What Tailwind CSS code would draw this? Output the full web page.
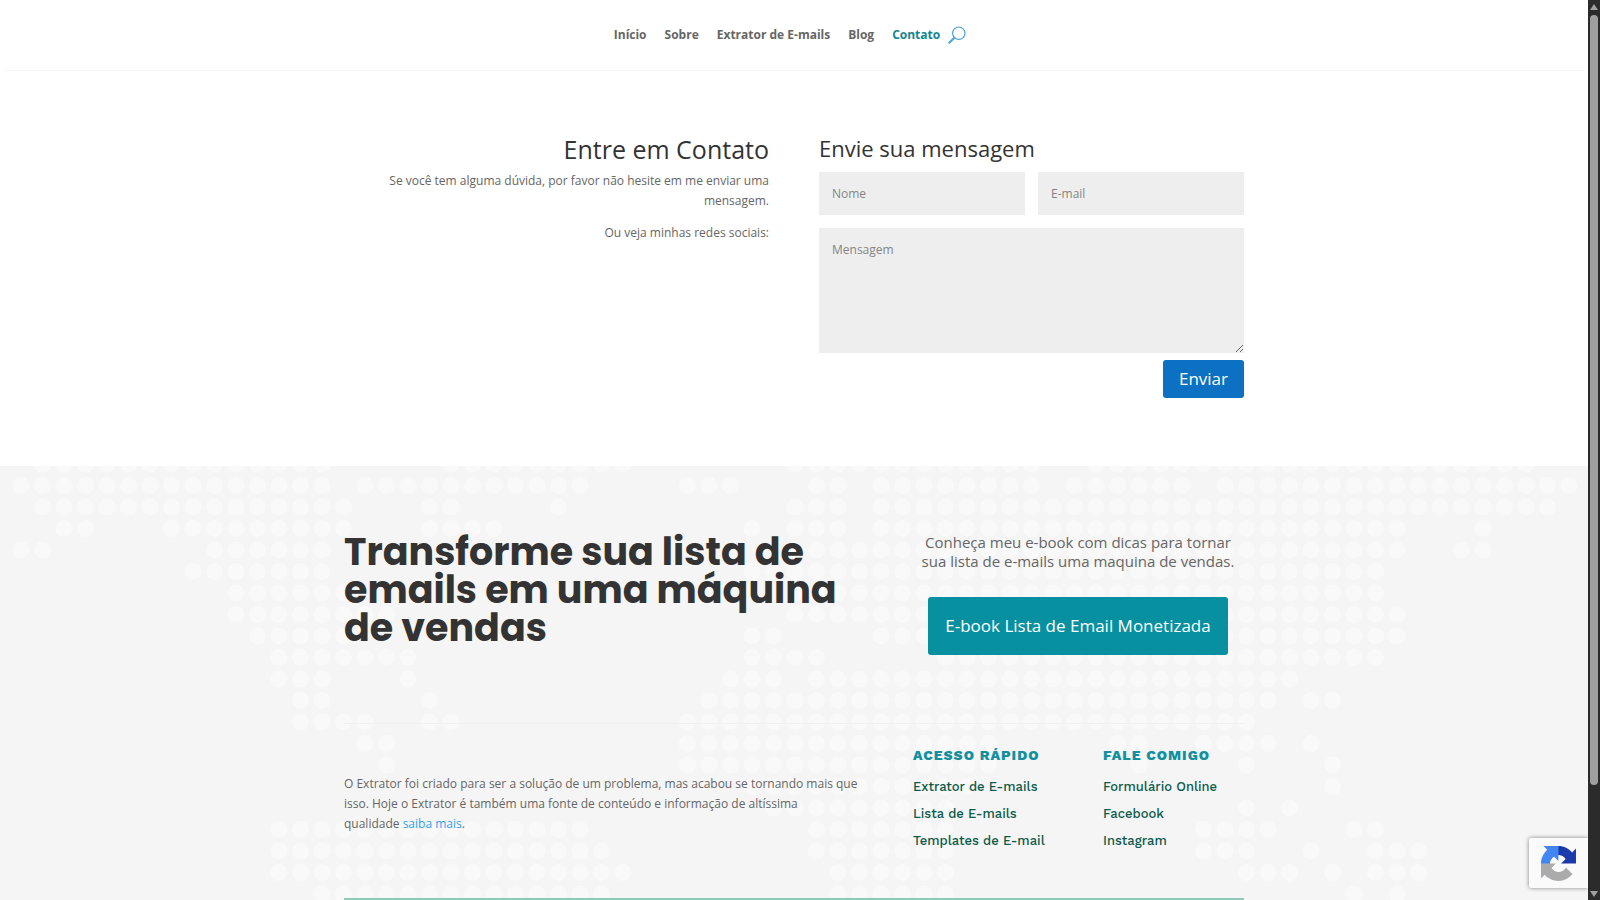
<!DOCTYPE html>
<html lang="pt-BR">
<head>
  <meta charset="UTF-8">
  <title>Contato - Extrator de E-mails</title>
  <meta name="viewport" content="width=device-width, initial-scale=1.0">
  <script src="https://cdn.jsdelivr.net/npm/@tailwindcss/browser@4"></script>
</head>
<body class="h-screen flex overflow-hidden bg-white font-['Open_Sans',sans-serif] text-[12px] leading-5 text-[#666]">

  <div class="relative flex-1 min-w-0 flex flex-col overflow-hidden">

    <header class="mx-1 h-[71px] shrink-0 border-b border-[#f5f5f5] flex justify-center">
      <nav class="flex items-center h-[70px] gap-[18px] pr-2 font-bold">
        <a href="#">Início</a>
        <a href="#">Sobre</a>
        <a href="#">Extrator de E-mails</a>
        <a href="#">Blog</a>
        <div class="flex items-center gap-2">
          <a href="#" class="text-[#13858f]">Contato</a>
          <button type="button" aria-label="Pesquisar" class="text-[#4ba3dc]">
            <svg class="size-[18px]" viewBox="0 0 18 18" fill="none" stroke="currentColor">
              <circle cx="10.8" cy="7.2" r="6.2" stroke-width="1.2"/>
              <path d="M6.3 11.7 1.3 16.7" stroke-width="2" stroke-linecap="round"/>
            </svg>
          </button>
        </div>
      </nav>
    </header>

    <main class="shrink-0 w-full max-w-[900px] mx-auto grid grid-cols-2 gap-[50px] pt-16 pb-[68px]">
      <section class="pl-10 text-right">
        <h1 class="text-[25px] leading-[28px] text-[#333]">Entre em Contato</h1>
        <p class="mt-2">Se você tem alguma dúvida, por favor não hesite em me enviar uma mensagem.</p>
        <p class="mt-3">Ou veja minhas redes sociais:</p>
      </section>

      <form class="flex flex-col" onsubmit="return false">
        <h2 class="text-[22px] leading-[27px] text-[#333]">Envie sua mensagem</h2>
        <div class="mt-[10px] grid grid-cols-2 gap-[13px]">
          <input type="text" placeholder="Nome" aria-label="Nome" class="h-[43px] min-w-0 bg-[#eee] px-[13px] placeholder:text-[#858585] outline-none">
          <input type="email" placeholder="E-mail" aria-label="E-mail" class="h-[43px] min-w-0 bg-[#eee] px-[13px] placeholder:text-[#858585] outline-none">
        </div>
        <textarea placeholder="Mensagem" aria-label="Mensagem" class="mt-[13px] h-[125px] bg-[#eee] px-[13px] py-3 placeholder:text-[#858585] outline-none"></textarea>
        <button type="submit" class="mt-[7px] self-end h-[38px] px-4 rounded-[3px] bg-[#0c71c3] text-white text-[17px]">Enviar</button>
      </form>
    </main>

    <footer class="relative flex-1 overflow-hidden bg-[#f5f5f5]">
      <svg id="mapa" class="absolute left-0 top-0 w-[1588px] h-[434px] fill-[#f9f9f9]" viewBox="0 0 1588 434" aria-hidden="true"></svg>

      <div class="relative w-full max-w-[900px] mx-auto">
        <div class="flex justify-between pt-[67px]">
          <h2 class="w-[510px] text-[38px] leading-[38px] font-bold text-[#333] font-['Poppins',sans-serif]">Transforme sua lista de emails em uma máquina de vendas</h2>
          <div class="w-[332px] flex flex-col items-center">
            <p class="text-[15px] leading-[19px] text-center">Conheça meu e-book com dicas para tornar sua lista de e-mails uma maquina de vendas.</p>
            <a href="#" class="mt-[26px] h-[58px] w-[300px] flex items-center justify-center rounded-[3px] bg-[#0690a0] text-white text-[17px] whitespace-nowrap">E-book Lista de Email Monetizada</a>
          </div>
        </div>

        <div class="mt-[68px] flex border-t border-[#f0f0f0] h-[175px]">
          <p class="w-[569px] pt-[50px] pr-[50px]">O Extrator foi criado para ser a solução de um problema, mas acabou se tornando mais que isso. Hoje o Extrator é também uma fonte de conteúdo e informação de altíssima<br>qualidade <a href="#" class="text-[#2ea3f2]">saiba mais</a>.</p>
          <div class="w-[190px] pt-5 text-[13px] font-['Work_Sans',sans-serif]">
            <h3 class="text-[14px] font-extrabold leading-[22px] tracking-[1px] text-[#13909f]">ACESSO RÁPIDO</h3>
            <ul class="mt-[7px] leading-[27px] font-medium text-[#0c5a4a]">
              <li><a href="#">Extrator de E-mails</a></li>
              <li><a href="#">Lista de E-mails</a></li>
              <li><a href="#">Templates de E-mail</a></li>
            </ul>
          </div>
          <div class="pt-5 text-[13px] font-['Work_Sans',sans-serif]">
            <h3 class="text-[14px] font-extrabold leading-[22px] tracking-[1px] text-[#13909f]">FALE COMIGO</h3>
            <ul class="mt-[7px] leading-[27px] font-medium text-[#0c5a4a]">
              <li><a href="#">Formulário Online</a></li>
              <li><a href="#">Facebook</a></li>
              <li><a href="#">Instagram</a></li>
            </ul>
          </div>
        </div>
        <div class="h-[2px] bg-[#8ec9b9]"></div>
      </div>
    </footer>

    <!-- selo reCAPTCHA -->
    <div class="absolute right-0 bottom-3 w-[59px] h-[50px] pl-3 flex items-center rounded-l-[2px] bg-[#fafafa] shadow-[0_0_4px_#808080]">
      <svg class="size-[35px]" viewBox="0 0 64 64" aria-label="reCAPTCHA">
        <path fill="#1c3aa9" d="M64 31.955l-.033-1.37V4.687l-7.16 7.16C50.948 4.674 42.033.093 32.05.093c-10.4 0-19.622 4.96-25.458 12.64l11.736 11.86a15.55 15.55 0 0 1 4.754-5.334c2.05-1.6 4.952-2.906 8.968-2.906.485 0 .86.057 1.135.163 4.976.393 9.288 3.14 11.828 7.124l-8.307 8.307L64 31.953"/>
        <path fill="#4285f4" d="M31.862.094l-1.37.033H4.594l7.16 7.16C4.58 13.147 0 22.06 0 32.046c0 10.4 4.96 19.622 12.64 25.458L24.5 45.768a15.55 15.55 0 0 1-5.334-4.754c-1.6-2.05-2.906-4.952-2.906-8.968 0-.485.057-.86.163-1.135.393-4.976 3.14-9.288 7.124-11.828l8.307 8.307L31.86.095"/>
        <path fill="#ababab" d="M.001 32.045l.033 1.37v25.898l7.16-7.16c5.86 7.173 14.774 11.754 24.76 11.754 10.4 0 19.622-4.96 25.458-12.64l-11.736-11.86a15.55 15.55 0 0 1-4.754 5.334c-2.05 1.6-4.952 2.906-8.968 2.906-.485 0-.86-.057-1.135-.163-4.976-.393-9.288-3.14-11.828-7.124l8.307-8.307c-10.522.04-22.4.066-27.295-.005"/>
      </svg>
    </div>
  </div>

  <!-- barra de rolagem -->
  <div class="w-3 shrink-0 bg-[#2b2b2b] flex flex-col items-center pt-1 pb-[3px]" aria-hidden="true">
    <svg class="w-2 h-[6px] fill-[#9f9f9f]" viewBox="0 0 8 6"><path d="M4 0 8 6H0z"/></svg>
    <div class="mt-[5px] w-2 h-[770px] rounded-full bg-[#9f9f9f]"></div>
    <svg class="mt-auto w-2 h-[6px] fill-[#9f9f9f]" viewBox="0 0 8 6"><path d="M4 6 8 0H0z"/></svg>
  </div>

  <script>
    // colunas preenchidas em cada linha do mapa: [inicio, fim]
    const linhas = [
      [[1,14],[20,28],[36,47],[50,70]],
      [[0,14],[16,23],[24,26],[31,33],[37,38],[40,47],[49,54],[56,72]],
      [[1,15],[19,20],[25,25],[36,38],[40,71]],
      [[2,3],[7,15],[19,22],[34,34],[36,38],[40,64],[68,68]],
      [[0,1],[9,14],[36,64],[67,68]],
      [[8,14],[34,63]],
      [[10,15],[36,63]],
      [[10,17],[36,64]],
      [[11,15],[34,35],[40,64]],
      [[12,18],[34,37],[43,63]],
      [[12,14],[18,18],[33,35],[37,59]],
      [[13,14],[19,19],[32,58],[60,61]],
      [[13,16],[19,20],[31,57]],
      [[16,17],[31,45],[51,52],[55,58],[60,60]],
      [[17,17],[31,45],[52,52],[57,57],[61,61]],
      [[34,44],[61,61]],
      [[35,43],[57,57],[59,59]],
      [[12,26],[37,43],[55,58],[62,63]],
      [[12,27],[37,43],[55,57],[60,60],[63,65]],
      [[12,28],[38,43],[57,59],[61,61],[63,65]],
      [[14,27],[38,43],[62,62],[64,64]]
    ];
    let pontos = '';
    linhas.forEach((faixas, l) => {
      faixas.forEach(([inicio, fim]) => {
        for (let c = inicio; c <= fim; c++) {
          pontos += `<circle cx="${21 + c * 21.5}" cy="${-2 + l * 21.5}" r="8.5"/>`;
        }
      });
    });
    document.getElementById('mapa').innerHTML = pontos;
  </script>

</body>
</html>
